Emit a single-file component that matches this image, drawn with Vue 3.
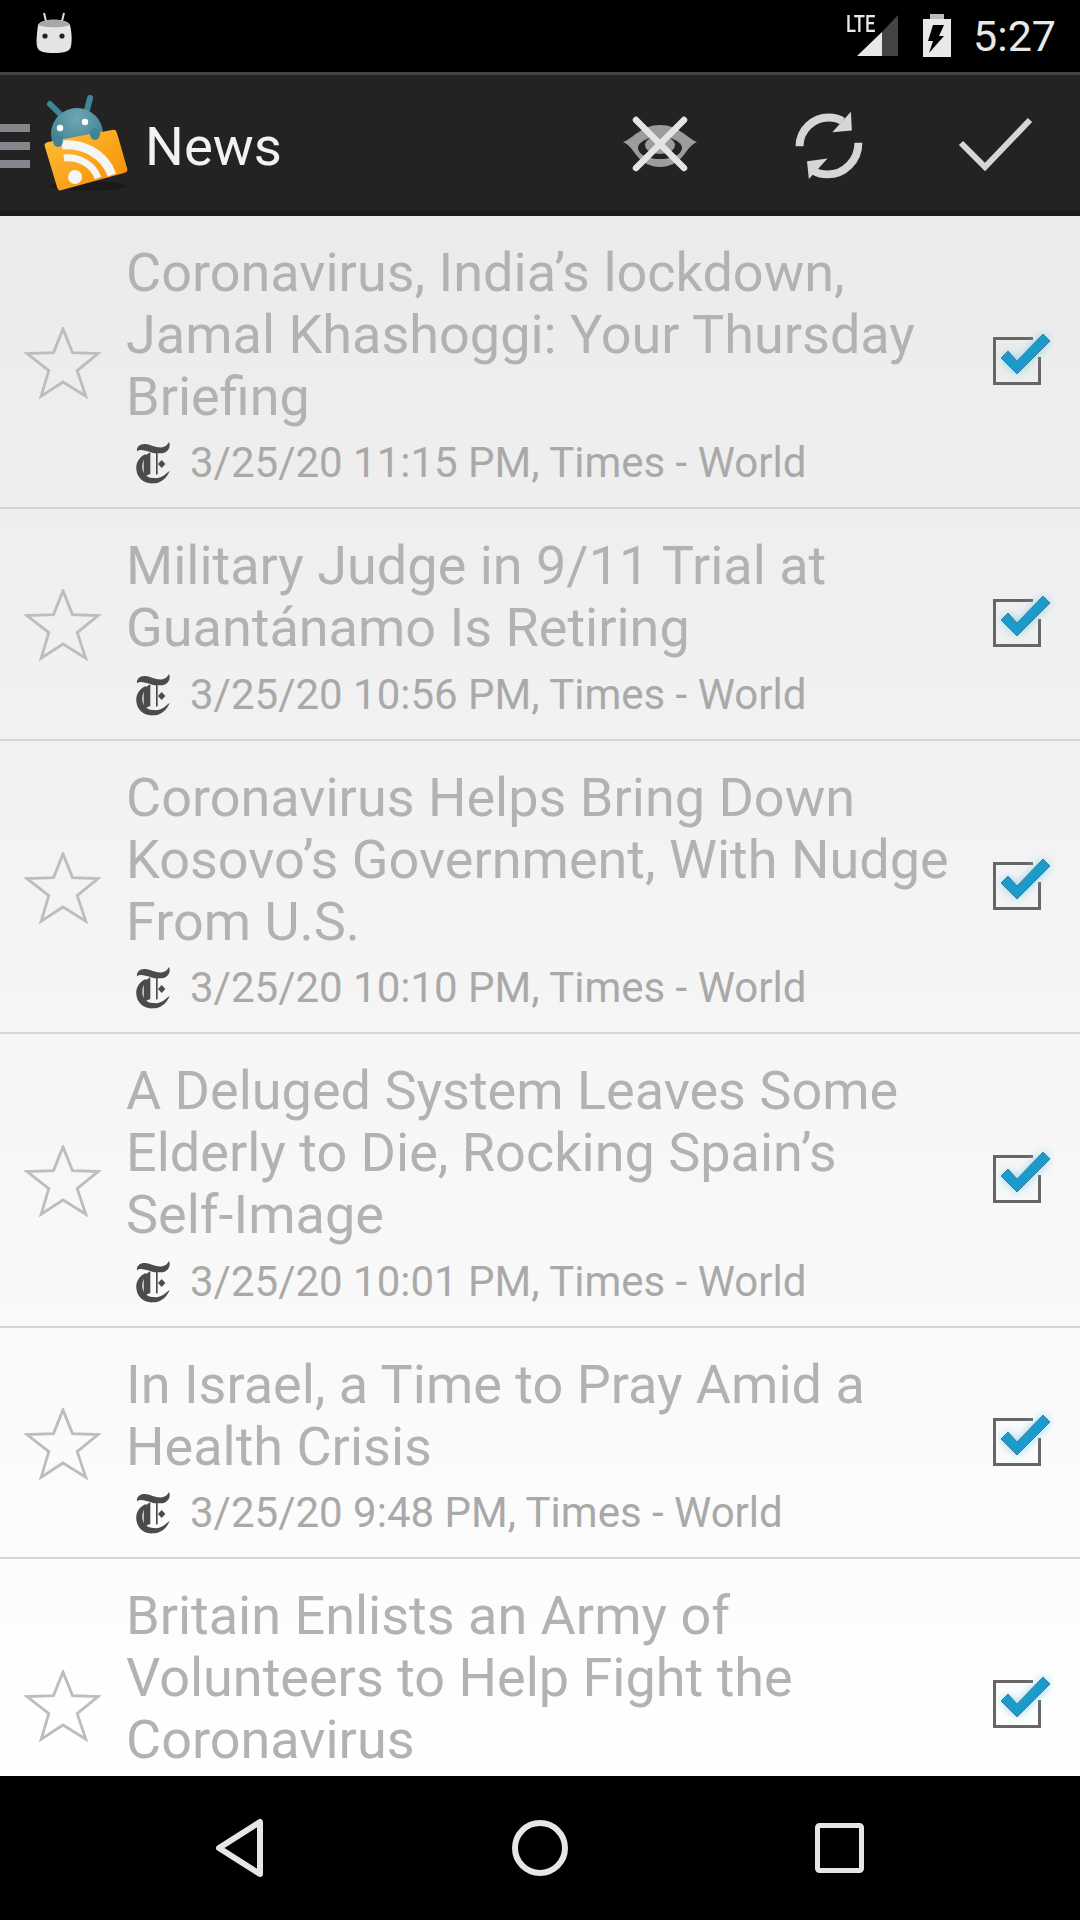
<template>
  <div class="screen">
    <div class="status-bar">
      <svg class="status-android" width="36" height="44" viewBox="0 0 36 44">
        <path d="M8 1l2 8M28 1l-2 8" stroke="#ddd" stroke-width="2" fill="none" />
        <path d="M2 13c3-7 29-7 32 0 2 8 2 17 1 21-1 6-7 7-17 7S2 40 1 34c-1-4 0-13 1-21z" fill="#e4e4e4" />
        <path d="M2 13c3-7 29-7 32 0-6 3-26 3-32 0z" fill="#a8a8a8" />
        <circle cx="9" cy="24" r="2.6" fill="#222" />
        <circle cx="26" cy="24" r="2.6" fill="#222" />
      </svg>
      <div class="status-right">
        <div class="signal">
          <span class="lte">LTE</span>
          <svg width="44" height="44" viewBox="0 0 44 44">
            <path d="M2 42L27 18V42z" fill="#e8e8e8" />
            <path d="M27 18L43 1V42H27z" fill="#444" />
          </svg>
        </div>
        <svg class="battery" width="30" height="44" viewBox="0 0 30 44">
          <path d="M8 0h14v5H8z" fill="#bbb" />
          <path d="M1 5h28v38H1z" fill="#e8e8e8" />
          <path d="M11 11h11l-5 11h5L7 39l4-12H6z" fill="#000" />
        </svg>
        <span class="clock">5:27</span>
      </div>
    </div>

    <div class="app-bar">
      <div class="drawer-icon"><i></i><i></i><i></i></div>
      <svg class="app-logo" width="90" height="104" viewBox="0 0 90 104">
        <defs>
          <linearGradient id="cardGrad" x1="0" y1="0" x2="1" y2="1">
            <stop offset="0" stop-color="#fcc13c" />
            <stop offset="1" stop-color="#f98c00" />
          </linearGradient>
          <radialGradient id="headGrad" cx="0.5" cy="0.2" r="0.9">
            <stop offset="0" stop-color="#6fa6b4" />
            <stop offset="1" stop-color="#2c7185" />
          </radialGradient>
        </defs>
        <path d="M10 12l10 10M50 6l-3 12" stroke="#3f8598" stroke-width="6" stroke-linecap="round" />
        <circle cx="37" cy="42" r="26" fill="url(#headGrad)" />
        <circle cx="20" cy="36" r="3.2" fill="#fff" />
        <circle cx="45" cy="30" r="3.2" fill="#fff" />
        <ellipse cx="48" cy="94" rx="38" ry="5" fill="#111" opacity="0.5" />
        <path d="M8 50L72 38c3-1 4 0 5 3l10 35c1 3 0 4-3 5L22 98c-3 1-4 0-5-3L5 55c-1-3 0-4 3-5z" fill="url(#cardGrad)" />
        <circle cx="35" cy="85" r="7" fill="#f5f5f5" />
        <path d="M24 66c14-2 29 6 34 20" stroke="#f5f5f5" stroke-width="7" fill="none" />
        <path d="M22 53c20-2 42 8 50 30" stroke="#f5f5f5" stroke-width="9" fill="none" />
        <ellipse cx="18" cy="49" rx="5" ry="6" fill="#3f8598" />
        <ellipse cx="55" cy="42" rx="5" ry="6" fill="#3f8598" />
      </svg>
      <span class="app-title">News</span>
      <div class="actions">
        <div class="action">
          <svg width="84" height="64" viewBox="0 0 84 64">
            <path d="M5 30c10-3 18-17 37-17s28 14 37 17c-7 3-10 9-14 14-6 7-14 11-23 11s-17-4-23-11c-4-5-7-11-14-14z" fill="#9c9c9c" />
            <ellipse cx="42" cy="36" rx="22" ry="11" fill="#232323" />
            <ellipse cx="42" cy="33" rx="15" ry="9" fill="#9c9c9c" />
            <path d="M18 8l48 48M66 8L18 56" stroke="#e4e4e4" stroke-width="6.5" stroke-linecap="round" />
          </svg>
        </div>
        <div class="action">
          <svg width="71" height="73" viewBox="0 0 76 78">
            <path d="M7 41C7 23 22 10 38 10c6 0 11 1 15 4M70 37c0 19-15 34-33 34-6 0-11-1-15-4" stroke="#d6d6d6" stroke-width="8.5" fill="none" />
            <path d="M62 4l1 20-21 2zM15 57l2 19 20-22z" fill="#d6d6d6" />
          </svg>
        </div>
        <div class="action">
          <svg width="76" height="60" viewBox="0 0 76 60">
            <path d="M3 29l24 24L72 6" stroke="#d6d6d6" stroke-width="6" fill="none" />
          </svg>
        </div>
      </div>
    </div>

    <div class="news-list">
      <div v-for="item in items" :key="item.title" class="news-row">
        <div class="star-col">
          <svg width="78" height="72" viewBox="0 0 82 76">
            <path d="M41 2l10 25 27 1-22 18 9 27-24-15-23 15 8-27L3 28l28-1z" stroke="#bdbdbd" stroke-width="3" fill="none" />
          </svg>
        </div>
        <div class="news-body">
          <div class="news-title">{{ item.title }}</div>
          <div class="news-meta">
            <template v-if="item.meta">
              <svg class="nyt-logo" width="60" height="58" viewBox="0 0 180 174">
                <path d="M36 52C34 38 46 28 62 30c16 2 34 14 50 10 10-2 16-8 20-16 6 14-2 30-20 34h-14v62l-5 2V58c-6 0-11-2-17-4v66L56 128V68l20-14C60 50 46 44 36 52z" fill="#4b4b4b" />
                <path d="M62 60C42 70 32 86 34 106c2 26 22 44 50 42 24 0 42-16 50-38l-12 10c-10 10-24 14-38 12-22-2-32-16-32-34 0-12 4-24 12-30z" fill="#4b4b4b" />
                <path d="M110 78l11 12-11 12-11-12z" fill="#4b4b4b" />
              </svg>
              <span>{{ item.meta }}</span>
            </template>
          </div>
        </div>
        <div class="check-col">
          <svg width="70" height="70" viewBox="0 0 70 70">
            <defs>
              <filter id="tickGlow" x="-40%" y="-40%" width="180%" height="180%">
                <feGaussianBlur stdDeviation="5" />
              </filter>
            </defs>
            <path d="M48 12.5H9.5v45h45V31" stroke="#666" stroke-width="3" fill="none" />
            <path d="M16 32l7-7 9 10L58 8l7 7-33 33z" fill="#7fd0ee" opacity="0.9" filter="url(#tickGlow)" />
            <path d="M16 32l7-7 9 10L58 8l7 7-33 33z" fill="#1b9bcb" stroke="#4f7d90" stroke-width="1" />
          </svg>
        </div>
      </div>
    </div>

    <div class="nav-bar">
      <svg width="52" height="60" viewBox="0 0 52 60">
        <path d="M46 4v52L5 30z" stroke="#e6e6e6" stroke-width="6" fill="none" stroke-linejoin="round" />
      </svg>
      <svg width="60" height="60" viewBox="0 0 60 60">
        <circle cx="30" cy="30" r="25" stroke="#e6e6e6" stroke-width="6" fill="none" />
      </svg>
      <svg width="52" height="54" viewBox="0 0 52 54">
        <rect x="3.5" y="4.5" width="44" height="45" rx="2" stroke="#e6e6e6" stroke-width="5" fill="none" />
      </svg>
    </div>
  </div>
</template>

<script setup>
const items = [
  { title: 'Coronavirus, India’s lockdown, Jamal Khashoggi: Your Thursday Briefing', meta: '3/25/20 11:15 PM, Times - World' },
  { title: 'Military Judge in 9/11 Trial at Guantánamo Is Retiring', meta: '3/25/20 10:56 PM, Times - World' },
  { title: 'Coronavirus Helps Bring Down Kosovo’s Government, With Nudge From U.S.', meta: '3/25/20 10:10 PM, Times - World' },
  { title: 'A Deluged System Leaves Some Elderly to Die, Rocking Spain’s Self-Image', meta: '3/25/20 10:01 PM, Times - World' },
  { title: 'In Israel, a Time to Pray Amid a Health Crisis', meta: '3/25/20 9:48 PM, Times - World' },
  { title: 'Britain Enlists an Army of Volunteers to Help Fight the Coronavirus', meta: '' },
]
</script>

<style scoped>
.screen {
  width: 1080px;
  height: 1920px;
  display: flex;
  flex-direction: column;
  overflow: hidden;
  font-family: Roboto, "Liberation Sans", sans-serif;
}

.status-bar {
  height: 72px;
  flex: none;
  background: #000;
  display: flex;
  align-items: center;
  justify-content: space-between;
  padding: 0 24px 0 36px;
  box-sizing: border-box;
}

.status-android {
  margin-top: -4px;
}

.status-right {
  display: flex;
  align-items: center;
}

.signal {
  position: relative;
  width: 53px;
  height: 44px;
  display: flex;
  justify-content: flex-end;
  margin-right: 23px;
}

.lte {
  position: absolute;
  left: 0;
  top: 0;
  font-size: 23px;
  line-height: 22px;
  font-weight: 500;
  color: #e8e8e8;
  transform: scaleX(0.8);
  transform-origin: left;
}

.battery {
  margin-right: 21px;
}

.clock {
  font-size: 43px;
  color: #e8e8e8;
}

.app-bar {
  height: 144px;
  flex: none;
  background: #232323;
  border-top: 3px solid #444;
  border-bottom: 6px solid #1c1c1c;
  box-sizing: border-box;
  display: flex;
  align-items: center;
}

.drawer-icon {
  width: 30px;
  margin-top: 7px;
  display: flex;
  flex-direction: column;
  gap: 10px;
  flex: none;
}

.drawer-icon i {
  display: block;
  height: 8px;
  background: #85858b;
}

.app-logo {
  margin-left: 10px;
  margin-top: 3px;
  flex: none;
}

.app-title {
  margin-left: 15px;
  margin-top: 6px;
  font-size: 54.5px;
  color: #f2f2f2;
}

.actions {
  margin-left: auto;
  margin-top: 3px;
  display: flex;
}

.action {
  width: 168px;
  display: flex;
  align-items: center;
  justify-content: center;
}

.news-list {
  flex: 1;
  min-height: 0;
  overflow: hidden;
  background: linear-gradient(#ebebeb, #fff);
}

.news-row {
  display: flex;
  align-items: center;
  border-bottom: 2px solid #d6d6d6;
  padding: 26px 0 15px;
}

.star-col {
  width: 126px;
  flex: none;
  display: flex;
  padding-left: 24px;
  box-sizing: border-box;
  margin-bottom: 9px;
}

.news-body {
  flex: 1;
  min-width: 0;
  padding-right: 34px;
}

.news-title {
  font-size: 54px;
  line-height: 61.8px;
  color: #b2b2b2;
}

.news-meta {
  margin-top: 7px;
  min-height: 58px;
  display: flex;
  align-items: center;
  font-size: 42px;
  line-height: 58px;
  color: #a9a9a9;
}

.nyt-logo {
  margin-left: -1px;
  margin-right: 5px;
  flex: none;
}

.check-col {
  width: 95px;
  flex: none;
  margin-bottom: 9px;
}

.nav-bar {
  height: 144px;
  flex: none;
  background: #000;
  display: flex;
  align-items: center;
  justify-content: space-between;
  padding: 0 214px;
  box-sizing: border-box;
}
</style>
